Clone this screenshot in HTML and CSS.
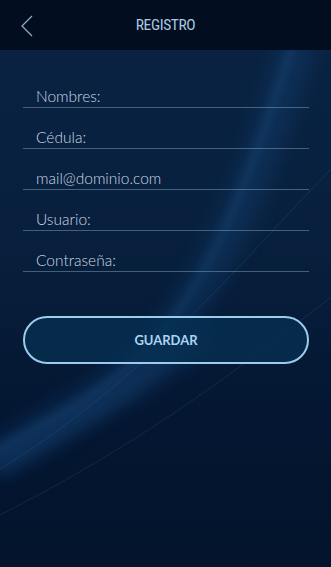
FILE: index.html
```html
<!doctype html>
<html>
<head>
    <meta charset="utf-8">
    <title>Registro</title>

    <link rel="stylesheet" href="styles.css">
</head>

<body>
    <div class="screen">
        <svg class="bg" width="331" height="567" viewBox="0 0 331 567">
          <defs>
            <filter id="soft"><feGaussianBlur stdDeviation="10"/></filter>
            <filter id="soft2"><feGaussianBlur stdDeviation="4"/></filter>
            <filter id="soft3"><feGaussianBlur stdDeviation="0.7"/></filter>
          </defs>
          <path d="M300 40 C 265 150, 230 260, 170 330 S 50 420, -10 460" fill="none" stroke="#1b5d9e" stroke-width="34" opacity="0.22" filter="url(#soft)"/>
          <path d="M292 45 C 258 150, 222 258, 165 328 S 45 418, -10 455" fill="none" stroke="#2d7cc0" stroke-width="7" opacity="0.16" filter="url(#soft2)"/>
          <path d="M340 160 C 250 250, 150 380, -10 475" fill="none" stroke="#2b7fb0" stroke-width="1" opacity="0.2" filter="url(#soft3)"/>
          <path d="M340 290 C 250 360, 150 440, -10 520" fill="none" stroke="#2a8a9e" stroke-width="1" opacity="0.18" filter="url(#soft3)"/>
          <path d="M210 330 C 150 380, 80 420, -10 470" fill="none" stroke="#2b6fb5" stroke-width="22" opacity="0.22" filter="url(#soft)"/>
        </svg>

        <div class="header">
            <a class="back" href="#">
              <svg width="12" height="22" viewBox="0 0 12 22">
                <path d="M11 1 L1 11 L11 21" fill="none" stroke="#8aa9c6" stroke-width="1.3"/>
              </svg>
            </a>
            <h1 class="title">REGISTRO</h1>
            <span></span>
        </div>

        <form class="form">
            <input class="field" type="text" placeholder="Nombres:">
            <input class="field" type="text" placeholder="Cédula:">
            <input class="field" type="email" placeholder="mail@dominio.com">
            <input class="field" type="text" placeholder="Usuario:">
            <input class="field" type="password" placeholder="Contraseña:">

            <button class="btn" type="button">GUARDAR</button>
        </form>
    </div>
</body>
</html>
```

FILE: styles.css
```css
html, body {
    margin: 0;
    padding: 0;
    background: #041530;
}

.screen {
    position: relative;
    width: 331px;
    height: 567px;
    overflow: hidden;
    background: linear-gradient(180deg, #0a2343 0%, #08203e 40%, #041631 75%, #03142c 100%);
    font-family: Lato, "Open Sans", sans-serif;
}

.bg {
    position: absolute;
    top: 0;
    left: 0;
}

.header {
    position: relative;
    height: 50px;
    background: #020e20;
    display: grid;
    grid-template-columns: 50px 1fr 50px;
    align-items: center;
}

.back {
    display: flex;
    padding-left: 21px;
    padding-top: 1px;
}

.title {
    margin: 0;
    text-align: center;
    font-family: "Liberation Sans Narrow", "Roboto Condensed", Roboto, sans-serif;
    font-weight: normal;
    font-size: 15.5px;
    letter-spacing: -0.4px;
    color: #a9c9e3;
}

.form {
    position: relative;
    padding: 17px 22px 0 23px;
    display: flex;
    flex-direction: column;
}

.field {
    box-sizing: border-box;
    width: 100%;
    height: 41px;
    padding: 20px 13px 2px;
    line-height: 18px;
    background: transparent;
    border: none;
    border-bottom: 1px solid rgba(140, 175, 205, 0.45);
    font-family: Lato, "Open Sans", sans-serif;
    font-weight: 300;
    font-size: 15.5px;
    color: #c8d7e5;
    outline: none;
}

.field::placeholder {
    color: #c8d7e5;
    opacity: 1;
}

.btn {
    margin-top: 44px;
    height: 48px;
    border: 2px solid #9ccbec;
    border-radius: 24px;
    background: rgba(6, 48, 82, 0.75);
    color: #acd4f2;
    font-family: Lato, sans-serif;
    font-weight: bold;
    font-size: 13px;
}
```
